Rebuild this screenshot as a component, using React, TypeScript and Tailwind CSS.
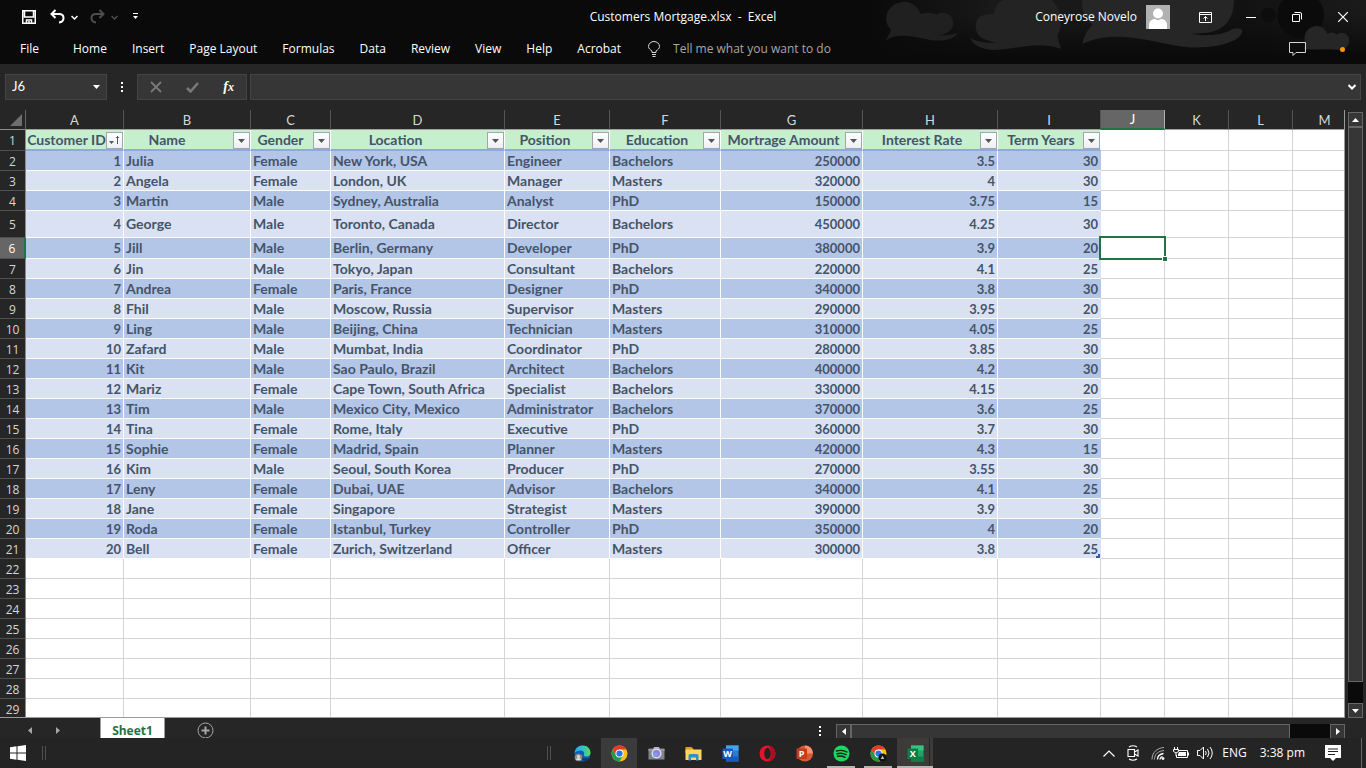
import type { ReactNode } from "react"
import clsx from "clsx"

type Customer = [number, string, string, string, string, string, number, number, number]

const customers: Customer[] = [
  [1, "Julia", "Female", "New York, USA", "Engineer", "Bachelors", 250000, 3.5, 30],
  [2, "Angela", "Female", "London, UK", "Manager", "Masters", 320000, 4, 30],
  [3, "Martin", "Male", "Sydney, Australia", "Analyst", "PhD", 150000, 3.75, 15],
  [4, "George", "Male", "Toronto, Canada", "Director", "Bachelors", 450000, 4.25, 30],
  [5, "Jill", "Male", "Berlin, Germany", "Developer", "PhD", 380000, 3.9, 20],
  [6, "Jin", "Male", "Tokyo, Japan", "Consultant", "Bachelors", 220000, 4.1, 25],
  [7, "Andrea", "Female", "Paris, France", "Designer", "PhD", 340000, 3.8, 30],
  [8, "Fhil", "Male", "Moscow, Russia", "Supervisor", "Masters", 290000, 3.95, 20],
  [9, "Ling", "Male", "Beijing, China", "Technician", "Masters", 310000, 4.05, 25],
  [10, "Zafard", "Male", "Mumbat, India", "Coordinator", "PhD", 280000, 3.85, 30],
  [11, "Kit", "Male", "Sao Paulo, Brazil", "Architect", "Bachelors", 400000, 4.2, 30],
  [12, "Mariz", "Female", "Cape Town, South Africa", "Specialist", "Bachelors", 330000, 4.15, 20],
  [13, "Tim", "Male", "Mexico City, Mexico", "Administrator", "Bachelors", 370000, 3.6, 25],
  [14, "Tina", "Female", "Rome, Italy", "Executive", "PhD", 360000, 3.7, 30],
  [15, "Sophie", "Female", "Madrid, Spain", "Planner", "Masters", 420000, 4.3, 15],
  [16, "Kim", "Male", "Seoul, South Korea", "Producer", "PhD", 270000, 3.55, 30],
  [17, "Leny", "Female", "Dubai, UAE", "Advisor", "Bachelors", 340000, 4.1, 25],
  [18, "Jane", "Female", "Singapore", "Strategist", "Masters", 390000, 3.9, 30],
  [19, "Roda", "Female", "Istanbul, Turkey", "Controller", "PhD", 350000, 4, 20],
  [20, "Bell", "Female", "Zurich, Switzerland", "Officer", "Masters", 300000, 3.8, 25],
]

const headers = [
  { label: "Customer ID", className: "pr-4" },
  { label: "Name", className: "pr-10" },
  { label: "Gender", className: "pr-5" },
  { label: "Location", className: "pr-11" },
  { label: "Position", className: "pr-6" },
  { label: "Education", className: "pr-4" },
  { label: "Mortrage Amount", className: "pr-4" },
  { label: "Interest Rate", className: "pr-4" },
  { label: "Term Years", className: "pr-4" },
]

const columns = [
  { letter: "A", width: "w-[98px]" },
  { letter: "B", width: "w-[127px]" },
  { letter: "C", width: "w-[80px]" },
  { letter: "D", width: "w-[174px]" },
  { letter: "E", width: "w-[105px]" },
  { letter: "F", width: "w-[111px]" },
  { letter: "G", width: "w-[142px]" },
  { letter: "H", width: "w-[135px]" },
  { letter: "I", width: "w-[103px]" },
  { letter: "J", width: "w-[64px]" },
  { letter: "K", width: "w-[64px]" },
  { letter: "L", width: "w-[64px]" },
  { letter: "M", width: "w-[64px]" },
]

const emptyColumns = ["J", "K", "L", "M"]
const emptyRows = [22, 23, 24, 25, 26, 27, 28, 29]
const menuItems = ["Home", "Insert", "Page Layout", "Formulas", "Data", "Review", "View", "Help", "Acrobat"]

const Clouds = () => (
  <svg className="absolute right-0 top-0 h-16 w-[496px]" viewBox="0 0 1488 192" aria-hidden="true">
    <defs>
      <linearGradient id="haze" x1="0" x2="1">
        <stop offset="0" stopColor="#0a0a0a" />
        <stop offset="0.25" stopColor="#191919" />
        <stop offset="0.42" stopColor="#191919" />
        <stop offset="0.75" stopColor="#121212" />
        <stop offset="1" stopColor="#1a1a1a" />
      </linearGradient>
      <linearGradient id="floor" x1="0" x2="0" y1="0" y2="1">
        <stop offset="0.2" stopColor="#0a0a0a" stopOpacity="0" />
        <stop offset="0.9" stopColor="#0a0a0a" />
      </linearGradient>
    </defs>
    <rect width="1488" height="192" fill="url(#haze)" />
    <rect width="1488" height="192" fill="url(#floor)" />
    <path d="M48 122C60 95 66 94 60 85C50 75 46 60 50 45C55 20 80 5 105 5C130 8 148 25 152 42C170 35 190 38 200 44C215 32 250 40 250 68C250 85 240 100 205 106C235 106 250 102 262 98C255 118 220 125 180 120C140 112 80 95 48 122Z" fill="#202020" />
    <path d="M302 115C320 125 350 130 380 128C340 120 315 110 317 75C320 50 335 42 372 42C375 20 385 5 400 0H545C565 20 572 40 572 70C572 90 565 100 562 108C566 125 570 135 573 146C500 120 440 150 365 150C330 145 310 138 302 115Z" fill="#232323" />
    <path d="M636 0H1092C1092 50 1070 92 1010 98L966 101C1010 110 1060 106 1085 88C1100 82 1117 84 1117 94C1110 130 1020 150 940 140C850 130 740 84 637 132C645 100 655 85 668 75C645 55 634 30 636 0Z" fill="#262626" />
    <circle cx="1195" cy="45" r="22" fill="#0d0d0d" />
    <circle cx="1292" cy="45" r="70" fill="#0b0b0b" />
    <path d="M1302 148C1308 130 1302 120 1304 108C1312 70 1362 68 1372 102C1385 94 1395 98 1400 104C1412 92 1440 100 1437 125C1435 140 1425 150 1400 150Z" fill="#262626" />
    <path d="M1230 192C1270 140 1400 140 1488 165V192Z" fill="#0a0a0a" />
  </svg>
)

const TitleBar = () => (
  <div className="relative grid h-[34px] grid-cols-[1fr_auto_1fr] items-center">
    <div className="flex items-center pl-[21px]">
      <button aria-label="Save" className="mr-[13px]">
        <svg width="16" height="16" viewBox="0 0 16 16" fill="none" stroke="#fff" strokeWidth="1.500">
          <path d="M1.750 1.750h12.500v12.500H1.750zM3.500 2v6h9V2M5.500 14v-3h5v3M8 12v2" />
        </svg>
      </button>
      <button aria-label="Undo">
        <svg width="15" height="16" viewBox="0 0 15 16" fill="none" stroke="#fff" strokeWidth="2">
          <path d="M5.500 1L1.500 5l4 4M2 5h7c6 0 6 8 0 8.500" />
        </svg>
      </button>
      <button aria-label="Undo options" className="ml-1.5">
        <svg width="7" height="5" viewBox="0 0 7 5" fill="none" stroke="#fff" strokeWidth="1.500"><path d="M.5 1l3 3 3-3" /></svg>
      </button>
      <button aria-label="Redo" className="ml-3">
        <svg width="15" height="16" viewBox="0 0 15 16" fill="none" stroke="#4d4d4d" strokeWidth="2">
          <path d="M9.500 1l4 4-4 4M13 5H6C0 5 0 13 6 13.500" />
        </svg>
      </button>
      <button aria-label="Redo options" className="ml-1.5">
        <svg width="7" height="5" viewBox="0 0 7 5" fill="none" stroke="#4d4d4d" strokeWidth="1.500"><path d="M.5 1l3 3 3-3" /></svg>
      </button>
      <button aria-label="Customize Quick Access Toolbar" className="ml-3.5">
        <svg width="7" height="8" viewBox="0 0 7 8" fill="#fff"><path d="M1 0h5v1H1zM1 3h5L3.500 6z" /></svg>
      </button>
    </div>
    <h1 className="whitespace-pre">Customers Mortgage.xlsx  -  Excel</h1>
    <div className="flex items-center justify-end">
      <span className="mr-[9px]">Coneyrose Novelo</span>
      <svg className="mr-3" width="24" height="24" viewBox="0 0 24 24" role="img" aria-label="Account">
        <path fill="#b1b1b1" d="M0 0h24v24H0z" />
        <circle cx="12" cy="8.500" r="5" fill="#fff" />
        <path d="M3 24v-4c0-4 3-6 6-6 2 1.500 4 1.500 6 0 3 0 6 2 6 6v4z" fill="#fff" />
      </svg>
      <button aria-label="Ribbon Display Options" className="flex h-[30px] w-[46px] items-center justify-center">
        <svg width="13" height="11" viewBox="0 0 13 11" fill="none" stroke="#fff">
          <path d="M.5.5h12v10H.5zM.5 2.500h12M6.500 9V4.500M4.500 6.500l2-2 2 2" />
        </svg>
      </button>
      <button aria-label="Minimize" className="flex h-[30px] w-[46px] items-center justify-center">
        <svg width="10" height="1" viewBox="0 0 10 1"><path d="M0 0h10v1H0z" fill="#fff" /></svg>
      </button>
      <button aria-label="Restore Down" className="flex h-[30px] w-[46px] items-center justify-center">
        <svg width="10" height="10" viewBox="0 0 10 10" fill="none" stroke="#fff">
          <path d="M.5 2.500h7v7h-7zM2.500.5H8Q9.500.5 9.500 2v5.500" />
        </svg>
      </button>
      <button aria-label="Close" className="flex h-[30px] w-[46px] items-center justify-center">
        <svg width="10" height="10" viewBox="0 0 10 10" stroke="#fff" strokeWidth="1.200"><path d="M0 0l10 10M10 0L0 10" /></svg>
      </button>
    </div>
  </div>
)

const MenuBar = () => (
  <nav className="relative flex h-[30px] items-center pl-5">
    <button className="mr-[34px]">File</button>
    <div className="flex gap-[25px]">
      {menuItems.map((item) => (
        <button key={item}>{item}</button>
      ))}
    </div>
    <label htmlFor="tell-me" className="ml-[27px]" aria-label="Search commands">
      <svg width="12" height="16" viewBox="0 0 12 16" fill="none" stroke="#d6d6d6">
        <path d="M4 11.500V10C2 8.500.5 7.500.5 5.500a5.500 5 0 0 1 11 0C11.500 7.500 10 8.500 8 10v1.500zM4 13.500h4M4.500 15.500h3" />
      </svg>
    </label>
    <input
      id="tell-me"
      placeholder="Tell me what you want to do"
      className="ml-[13px] w-48 bg-transparent outline-none placeholder:text-[#a6a6a6]"
    />
    <button aria-label="Comments" className="ml-auto mr-[34px]">
      <svg width="17" height="14" viewBox="0 0 17 14" fill="none" stroke="#d6d6d6">
        <path d="M.5.5h16v10H7l-3 3v-3H.5z" />
      </svg>
    </button>
    <span className="mr-[21px] size-[5px] rounded-full bg-[#ff9500]" />
  </nav>
)

const FormulaBar = () => (
  <div className="flex h-[46px] items-center bg-[#262626] pl-[5px] pr-[5px]">
    <div className="flex h-[26px] w-[102px] items-center border border-[#444] bg-[#363636] pl-1.5 pr-1.5">
      <input
        aria-label="Name Box"
        defaultValue="J6"
        className="w-full min-w-0 bg-transparent font-['Lato',sans-serif] text-[13px] outline-none"
      />
      <svg className="shrink-0" width="7" height="4" viewBox="0 0 7 4"><path d="M0 0h7L3.500 4z" fill="#fff" /></svg>
    </div>
    <svg className="mx-3.5" width="2" height="10" viewBox="0 0 2 10" fill="#fff">
      <path d="M0 0h2v2H0zM0 4h2v2H0zM0 8h2v2H0z" />
    </svg>
    <div className="mr-[3px] flex h-[26px] w-[110px] items-center justify-between border border-[#444] bg-[#363636] pl-3 pr-3">
      <button aria-label="Cancel">
        <svg width="12" height="12" viewBox="0 0 12 12" stroke="#7a7a7a" strokeWidth="1.800"><path d="M1 1l10 10M11 1L1 11" /></svg>
      </button>
      <button aria-label="Enter">
        <svg width="13" height="11" viewBox="0 0 13 11" fill="none" stroke="#7a7a7a" strokeWidth="2.500"><path d="M1 6l3.500 3.500L12 1" /></svg>
      </button>
      <button className="font-['Liberation_Serif',serif] text-sm font-bold italic" aria-label="Insert Function">
        f<span className="text-xs">x</span>
      </button>
    </div>
    <div className="flex h-[26px] flex-1 items-center border border-[#444] bg-[#363636] pr-1">
      <input aria-label="Formula Bar" className="h-full w-full min-w-0 bg-transparent px-1 outline-none" />
      <button aria-label="Expand Formula Bar">
        <svg width="8" height="6" viewBox="0 0 8 6" fill="none" stroke="#fff" strokeWidth="2"><path d="M.5 1L4 4.500 7.500 1" /></svg>
      </button>
    </div>
  </div>
)

const FilterButton = ({ label, sorted }: { label: string; sorted?: boolean }) => (
  <button
    aria-label={`Filter ${label}`}
    className="absolute bottom-0 right-0 flex size-[17px] items-center justify-center border border-[#a3a5ad] bg-linear-to-b from-white to-[#eceff4]"
  >
    {sorted ? (
      <svg width="11" height="9" viewBox="0 0 11 9" fill="#555"><path d="M0 5h5L2.500 8zM8 0h1v8H8zM6.500 2L8.500 0l2 2z" /></svg>
    ) : (
      <svg width="7" height="4" viewBox="0 0 7 4"><path d="M0 0h7L3.500 4z" fill="#555" /></svg>
    )}
  </button>
)

const RowNumber = ({ n }: { n: number }) => (
  <th
    scope="row"
    className={clsx(
      "border-b border-b-[#505050] pt-0.5 text-center font-['Open_Sans',sans-serif] text-xs leading-4 font-normal",
      n === 6
        ? "border-r-2 border-r-[#217346] bg-[#666] text-white"
        : "border-r border-r-[#8c8c8c] bg-[#262626] text-[#d6d6d6]",
    )}
  >
    {n}
  </th>
)

const EmptyCells = ({ row, letters }: { row: number; letters: string[] }) =>
  letters.map((letter) => (
    <td key={letter} className="relative border-b border-r border-[#d4d4d4] bg-white">
      {row === 6 && letter === "J" && (
        <div className="absolute -inset-[2px] z-10 border-2 border-[#217346]">
          <span className="absolute -bottom-[4px] -right-[4px] size-[6px] border border-white bg-[#217346]" />
        </div>
      )}
    </td>
  ))

const Sheet = () => (
  <div className="min-w-0 flex-1 overflow-hidden border-b border-r border-[#9a9a9a] bg-[#262626]">
    <table className="w-max table-fixed border-separate border-spacing-0">
      <colgroup>
        <col className="w-[26px]" />
        {columns.map((column) => (
          <col key={column.letter} className={column.width} />
        ))}
      </colgroup>
      <thead>
        <tr className="h-5">
          <td className="border-b border-r border-b-[#8c8c8c] border-r-[#666]">
            <button aria-label="Select All" className="ml-2.5 block">
              <svg width="12" height="12" viewBox="0 0 12 12"><path d="M12 0v12H0z" fill="#6e6e6e" /></svg>
            </button>
          </td>
          {columns.map(({ letter }) => (
            <th
              key={letter}
              scope="col"
              className={clsx(
                "text-center font-['Lato',sans-serif] text-[13px] leading-[18px] font-normal",
                letter === "J"
                  ? "border-b-2 border-r border-b-[#217346] border-r-[#b0b0b0] bg-[#666] text-white"
                  : "border-b border-r border-b-[#a0a0a0] border-r-[#555] text-[#d6d6d6]",
              )}
            >
              {letter}
            </th>
          ))}
        </tr>
      </thead>
      <tbody className="font-['Lato',sans-serif] text-sm leading-[18px] font-bold text-[#44546a]">
        <tr className="h-[21px]">
          <RowNumber n={1} />
          {headers.map(({ label, className }, i) => (
            <th
              key={label}
              scope="col"
              className={clsx(
                "relative whitespace-nowrap border-b-2 border-r border-b-[#8ea9db] border-r-white bg-[#c6efce] text-center leading-[18px]",
                className,
              )}
            >
              {label}
              <FilterButton label={label} sorted={i === 0} />
            </th>
          ))}
          <EmptyCells row={1} letters={emptyColumns} />
        </tr>
        {customers.map((customer, index) => (
          <tr key={customer[0]} className={clsx(index === 3 ? "h-[27px]" : index === 4 ? "h-[21px]" : "h-5")}>
            <RowNumber n={index + 2} />
            {customer.map((value, i) => (
              <td
                key={i}
                className={clsx(
                  "relative whitespace-nowrap border-b border-r border-white px-0.5 leading-[18px]",
                  typeof value === "number" && "text-right text-[13px]",
                  index % 2 === 0 ? "bg-[#b4c6e7]" : "bg-[#d9e1f2]",
                  i === 8 && (index % 2 === 0 ? "border-r-[#b4c6e7]" : "border-r-[#d9e1f2]"),
                )}
              >
                {value}
                {index === 19 && i === 8 && (
                  <svg className="absolute bottom-0 right-0" width="4" height="4" viewBox="0 0 4 4">
                    <path d="M2 0h2v4H0V2h2z" fill="#3f51b5" />
                  </svg>
                )}
              </td>
            ))}
            <EmptyCells row={index + 2} letters={emptyColumns} />
          </tr>
        ))}
        {emptyRows.map((n) => (
          <tr key={n} className="h-5">
            <RowNumber n={n} />
            <EmptyCells row={n} letters={columns.map((c) => c.letter)} />
          </tr>
        ))}
      </tbody>
    </table>
  </div>
)

const VerticalScroll = () => (
  <div className="ml-[3px] mr-[3px] mt-0.5 flex w-[15px] flex-col bg-[#0a0a0a]">
    <button aria-label="Scroll up" className="flex h-[15px] items-center justify-center border border-[#666] bg-[#363636]">
      <svg width="7" height="4" viewBox="0 0 7 4"><path d="M0 4h7L3.500 0z" fill="#fff" /></svg>
    </button>
    <div className="flex-1 border border-[#666] bg-[#363636]" />
    <button aria-label="Scroll down" className="mt-[21px] flex h-[15px] items-center justify-center border border-[#666] bg-[#363636]">
      <svg width="7" height="4" viewBox="0 0 7 4"><path d="M0 0h7L3.500 4z" fill="#fff" /></svg>
    </button>
  </div>
)

const SheetBar = () => (
  <div className="flex h-5 items-start overflow-hidden bg-[#262626] pr-[21px]">
    <button aria-label="Previous sheet" className="ml-7 mt-[9px]">
      <svg width="4" height="7" viewBox="0 0 4 7"><path d="M4 0v7L0 3.500z" fill="#a6a6a6" /></svg>
    </button>
    <button aria-label="Next sheet" className="ml-6 mt-[9px]">
      <svg width="4" height="7" viewBox="0 0 4 7"><path d="M0 0v7l4-3.500z" fill="#a6a6a6" /></svg>
    </button>
    <button className="relative -mt-px ml-10 h-[22px] w-[65px] border-x border-[#9a9a9a] bg-white pt-1.5 text-center leading-4 font-bold text-[#217346]">
      Sheet1
    </button>
    <button aria-label="New sheet" className="ml-8 mt-1">
      <svg width="17" height="17" viewBox="0 0 17 17" fill="none" stroke="#a6a6a6">
        <circle cx="8.500" cy="8.500" r="7.500" />
        <path d="M8.500 4.500v8M4.500 8.500h8" strokeWidth="2" />
      </svg>
    </button>
    <svg className="ml-auto mr-[15px] mt-2" width="2" height="10" viewBox="0 0 2 10" fill="#fff">
      <path d="M0 0h2v2H0zM0 4h2v2H0zM0 8h2v2H0z" />
    </svg>
    <div className="mt-1.5 flex h-[15px] w-[509px] bg-[#0a0a0a]">
      <button aria-label="Scroll left" className="flex w-[15px] items-center justify-center border border-[#666] bg-[#363636]">
        <svg width="4" height="7" viewBox="0 0 4 7"><path d="M4 0v7L0 3.500z" fill="#fff" /></svg>
      </button>
      <div className="mr-10 flex-1 border border-[#666] bg-[#363636]" />
      <button aria-label="Scroll right" className="flex w-[15px] items-center justify-center border border-[#666] bg-[#363636]">
        <svg width="4" height="7" viewBox="0 0 4 7"><path d="M0 0v7l4-3.500z" fill="#fff" /></svg>
      </button>
    </div>
  </div>
)

const EdgeIcon = () => (
  <svg width="17" height="17" viewBox="0 0 17 17">
    <defs>
      <linearGradient id="edge" x1="0" x2="1">
        <stop offset="0" stopColor="#2aa9ea" />
        <stop offset="0.6" stopColor="#2fc6c0" />
        <stop offset="1" stopColor="#62d94b" />
      </linearGradient>
    </defs>
    <circle cx="8.500" cy="8.500" r="8" fill="#0f5fb8" />
    <path d="M.5 8C1 3.500 4.500.5 8.500.5c5 0 8 3.500 8 7 0 3-2 4-4 4-2.500 0-3-1-2.500-2 1-2-1-4-3.500-4C4 5.500 1.500 6.500.5 8z" fill="url(#edge)" />
    <path d="M7 8c-1 3 2 6.500 8.500 5 1-.3.500.5 0 1-3 3-9 2.500-10-2.500C5.200 10 6 8.500 7 8z" fill="#113a6e" />
    <circle cx="4.500" cy="12.500" r="3.800" fill="#8d8d8d" />
    <circle cx="4.500" cy="11.500" r="1.500" fill="#ddd" />
    <path d="M2 15a2.500 2 0 0 1 5 0z" fill="#ddd" />
  </svg>
)

const ChromeIcon = ({ badge }: { badge?: boolean }) => (
  <svg width="17" height="17" viewBox="0 0 17 17">
    <circle cx="8.500" cy="8.500" r="8" fill="#fbc116" />
    <path d="M1.570 4.500a8 8 0 0 1 13.860 0H8.500L5 10.500z" fill="#e33b2e" />
    <path d="M1.570 4.500A8 8 0 0 0 8.500 16.500L12 10.500H5z" fill="#229a4a" />
    <circle cx="8.500" cy="8.500" r="4" fill="#fff" />
    <circle cx="8.500" cy="8.500" r="3.100" fill="#2a74e8" />
    {badge && (
      <>
        <circle cx="12.500" cy="12.500" r="4" fill="#111" />
        <path d="M12.500 10.500l1.800 3.500h-3.600z" fill="#bbb" />
      </>
    )}
  </svg>
)

const CameraIcon = () => (
  <svg width="17" height="17" viewBox="0 0 17 17">
    <path d="M6 2h5l1 2H5z" fill="#b3b8bd" />
    <rect x="0.500" y="3.500" width="16" height="11" rx="0.500" fill="#7d868e" />
    <path d="M.5 4h16v2H.5z" fill="#939ba2" />
    <circle cx="8.500" cy="8.500" r="5" fill="#e4e6ea" />
    <circle cx="8.500" cy="8.500" r="3.700" fill="#9a7fe0" />
    <circle cx="7.500" cy="9.500" r="2" fill="#67a9ea" />
  </svg>
)

const FolderIcon = () => (
  <svg width="17" height="17" viewBox="0 0 17 17">
    <path d="M.5 2h6l2 2v4h-8z" fill="#e0a010" />
    <path d="M.5 4.500H16.500v10.500H.5z" fill="#ffd75e" />
    <path d="M3.500 15.500V10.500q0-1.500 1.500-1.500h7q1.500 0 1.500 1.500v5h-2.500v-3h-5v3z" fill="#2f8fd6" />
  </svg>
)

type OfficeProps = { letter: string; base: string; light: string; mid: string; round?: boolean }

const OfficeIcon = ({ letter, base, light, mid, round }: OfficeProps) => (
  <svg width="17" height="17" viewBox="0 0 17 17">
    {round ? (
      <>
        <circle cx="9" cy="8.500" r="8" fill={light} />
        <path d="M9 .5a8 8 0 0 1 8 8H9z" fill={mid} />
      </>
    ) : (
      <>
        <path d="M4 .5h12.500v16H4z" fill={mid} />
        <path d="M4 .5h12.500v5H4z" fill={light} />
        <path d="M4 11.500h12.500v5H4z" fill={base} />
      </>
    )}
    <rect x="0.500" y="3.500" width="10.500" height="10.500" rx="0.500" fill={base} />
    <text x="5.700" y="12" textAnchor="middle" fontFamily="Open Sans, sans-serif" fontWeight="bold" fontSize="9" fill="#fff">
      {letter}
    </text>
  </svg>
)

const OperaIcon = () => (
  <svg width="17" height="17" viewBox="0 0 17 17">
    <circle cx="8.500" cy="8.500" r="8" fill="#e8132b" />
    <path d="M8.500.5a8 8 0 0 1 0 16c5-1 5-15 0-16z" fill="#a8101f" />
    <ellipse cx="8.500" cy="8.500" rx="3.300" ry="5.700" fill="#242424" />
  </svg>
)

const SpotifyIcon = () => (
  <svg width="17" height="17" viewBox="0 0 17 17">
    <circle cx="8.500" cy="8.500" r="8" fill="#1ed760" />
    <path d="M3.500 6c3.500-1 7.500-.700 10.500 1M4 8.700c3-.8 6.300-.5 9 1M4.500 11.300c2.500-.600 5-.4 7.500 1" fill="none" stroke="#1c1c1c" strokeWidth="1.400" strokeLinecap="round" />
  </svg>
)

type Task = { name: string; icon: ReactNode; state?: "hover" | "open" | "active" }

const tasks: Task[] = [
  { name: "Edge", icon: <EdgeIcon /> },
  { name: "Chrome", icon: <ChromeIcon />, state: "hover" },
  { name: "Camera", icon: <CameraIcon /> },
  { name: "File Explorer", icon: <FolderIcon /> },
  { name: "Word", icon: <OfficeIcon letter="W" base="#185abd" mid="#2b7cd3" light="#41a5ee" /> },
  { name: "Opera", icon: <OperaIcon /> },
  { name: "PowerPoint", icon: <OfficeIcon letter="P" base="#c43e1c" mid="#ff8f6b" light="#d9583a" round /> },
  { name: "Spotify", icon: <SpotifyIcon />, state: "open" },
  { name: "Chrome profile", icon: <ChromeIcon badge />, state: "open" },
  { name: "Excel", icon: <OfficeIcon letter="X" base="#107c41" mid="#21a366" light="#33c481" />, state: "active" },
]

const Taskbar = () => (
  <footer className="flex h-[30px] items-center bg-[#242424]">
    <div className="flex w-[40%] items-center pl-2.5">
      <button aria-label="Start">
        <svg width="16" height="16" viewBox="0 0 16 16" fill="#fff">
          <path d="M0 2.200L6.500 1.300V7.500H0zM7.500 1.150L16 0v7.500H7.500zM0 8.500h6.500v6.200L0 13.800zM7.500 8.500H16V16L7.500 14.850z" />
        </svg>
      </button>
      <span className="ml-4 h-[14px] w-1 border-x border-[#505050]" />
    </div>
    <span className="ml-px h-[14px] w-1 border-x border-[#505050]" />
    <div className="ml-[13px] flex h-full gap-px">
      {tasks.map(({ name, icon, state }) => (
        <button
          key={name}
          aria-label={name}
          className={clsx(
            "relative flex h-full w-9 items-center justify-center",
            state === "hover" && "bg-[#3b3b3b]",
            state === "active" && "bg-[#3d3b39]",
          )}
        >
          {icon}
          {state === "open" && <span className="absolute inset-x-1 bottom-0 h-0.5 bg-[#b8b4ae]" />}
          {state === "active" && (
            <>
              <span className="absolute inset-y-0 right-[3px] w-px bg-[#242424]" />
              <span className="absolute inset-x-0 bottom-0 h-0.5 bg-[#b8b4ae]" />
            </>
          )}
        </button>
      ))}
    </div>
    <div className="ml-auto flex h-full items-center pr-1">
      <button aria-label="Show hidden icons" className="mr-3">
        <svg width="12" height="7" viewBox="0 0 12 7" fill="none" stroke="#fff" strokeWidth="1.200"><path d="M.5 6.500L6 1l5.500 5.500" /></svg>
      </button>
      <button aria-label="Meet Now" className="mr-3">
        <svg width="12" height="16" viewBox="0 0 12 16" fill="none" stroke="#fff" strokeWidth="1.100">
          <path d="M1 4.500h6.500v7H1zM7.500 7l3.500-2v6L7.500 9M2 2Q6-.5 10 2M2 14Q6 16.500 10 14" />
        </svg>
      </button>
      <button aria-label="Network" className="mr-2">
        <svg width="14" height="13" viewBox="0 0 14 13" fill="none" stroke="#fff">
          <path d="M9 12.500C9 11 10 10 11.500 9.500M6.500 12.500C6.500 9 9 7 12.500 6.500" strokeWidth="1.300" />
          <path d="M3.500 12.500C3.500 7 7.500 4 13 3.500M1 12.500C1 5.500 6 1 13 .5" stroke="#aaa" />
          <circle cx="12" cy="11.500" r="1" fill="#fff" />
        </svg>
      </button>
      <button aria-label="Battery" className="mr-2">
        <svg width="16" height="13" viewBox="0 0 16 13" fill="none" stroke="#fff">
          <path d="M6 3.500h8.500v7h-11V8M15.500 5.500v3" />
          <path d="M6 5h7v4H5V7z" fill="#fff" stroke="none" />
          <path d="M1.500 0v3M4.500 0v3M.5 2.500h5v2q-2.500 3-5 0zM3 6v3" />
        </svg>
      </button>
      <button aria-label="Volume" className="mr-2">
        <svg width="17" height="14" viewBox="0 0 17 14" fill="none" stroke="#fff">
          <path d="M.5 4.500H3L6.500 1v12L3 9.500H.5zM8.500 5q1.500 2 0 4M10.500 3q3 4 0 8M13 1q4.500 6 0 12" />
        </svg>
      </button>
      <button className="mr-[13px]">ENG</button>
      <time className="mr-5">3:38 pm</time>
      <button aria-label="Notifications" className="mr-5">
        <svg width="16" height="16" viewBox="0 0 16 16">
          <path d="M0 0h16v13h-5l-3 3-3-3H0z" fill="#fff" />
          <path d="M3 4h10M3 6.500h10M3 9.500h7" stroke="#222" />
        </svg>
      </button>
      <span className="h-full w-px bg-[#666]" />
    </div>
  </footer>
)

export default function App() {
  return (
    <div className="flex h-screen flex-col overflow-hidden bg-[#262626] font-['Open_Sans',sans-serif] text-xs text-white">
      <header className="relative bg-[#0a0a0a]">
        <Clouds />
        <TitleBar />
        <MenuBar />
      </header>
      <FormulaBar />
      <main className="flex min-h-0 flex-1">
        <Sheet />
        <VerticalScroll />
      </main>
      <SheetBar />
      <Taskbar />
    </div>
  )
}
